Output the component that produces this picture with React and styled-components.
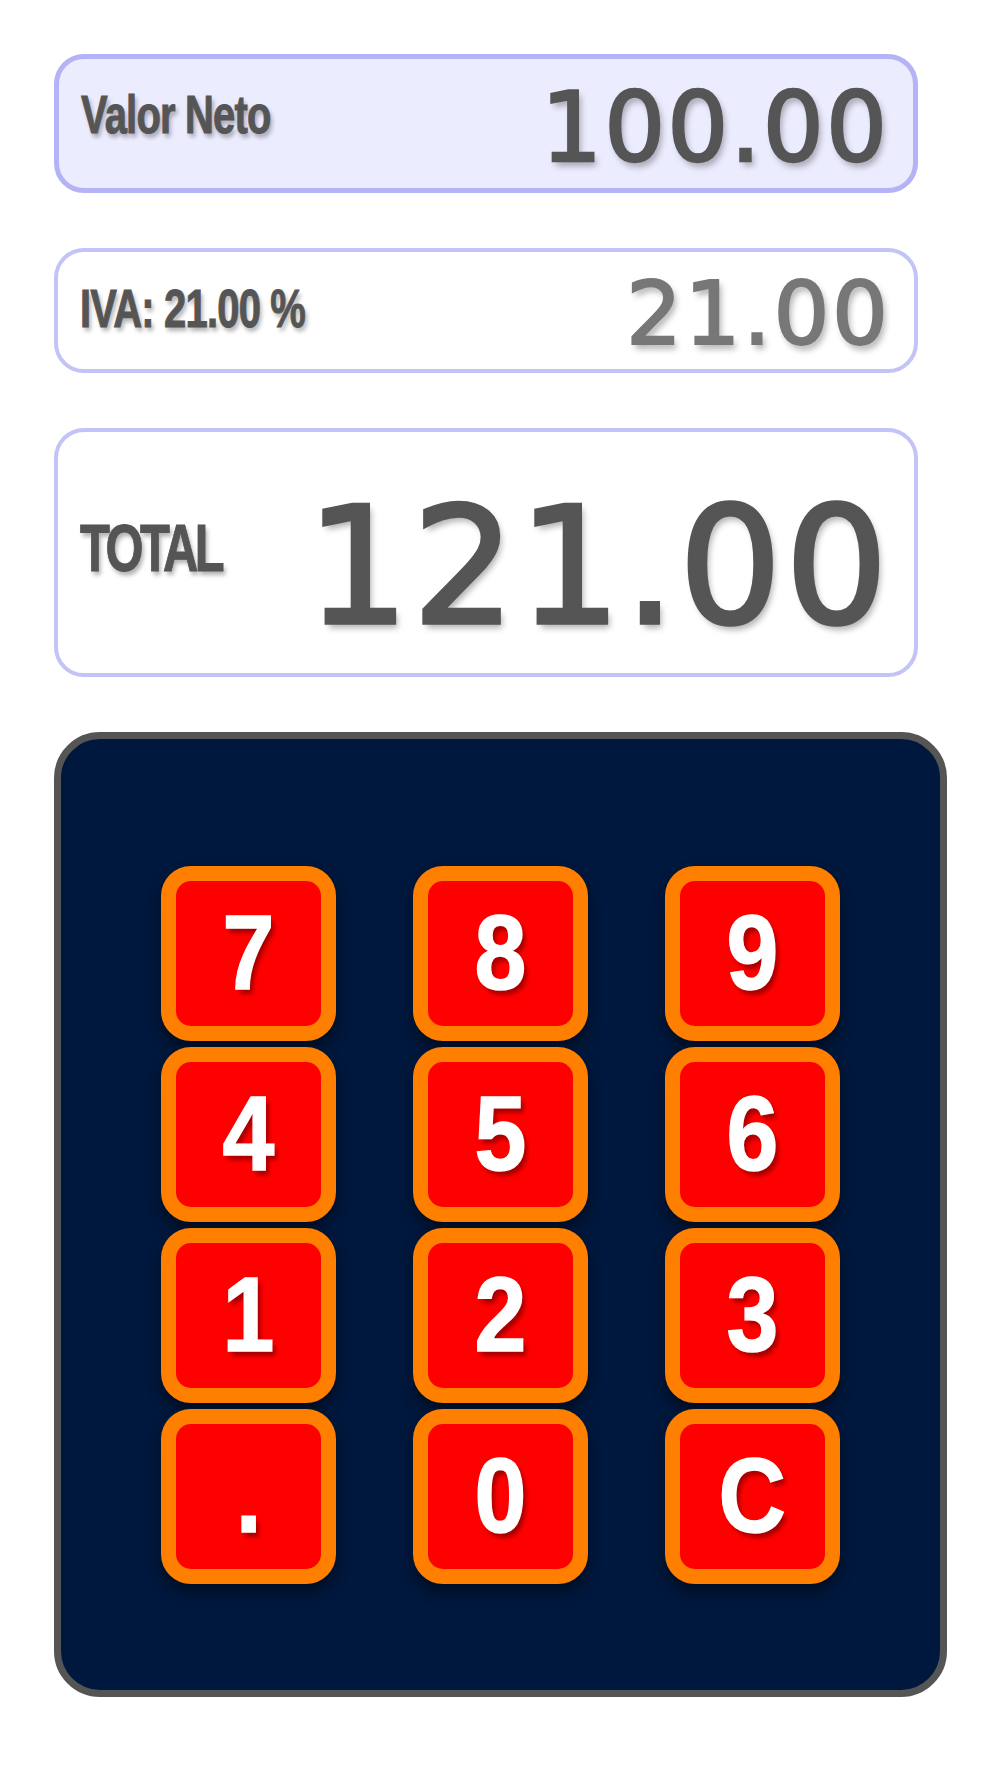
import React from 'react'
import styled, {createGlobalStyle} from 'styled-components'

const GlobalStyle = createGlobalStyle`
    html, body {
        margin: 0;
        padding: 0;
        background: #ffffff;
    }
`

const Page = styled.div`
    display: flex;
    flex-direction: column;
    gap: 55px;
    padding: 54px;
    width: 893px;
`

const DisplayBox = styled.div`
    box-sizing: border-box;
    display: flex;
    align-items: center;
    justify-content: space-between;
    width: 864px;
    height: ${props => props.$height}px;
    padding: 0 26px 0 22px;
    border: ${props => props.$highlight ? '5px solid #b3b3f6' : '4px solid #c3c3f8'};
    border-radius: 30px;
    background-color: ${props => props.$highlight ? '#ececff' : '#ffffff'};
`

// condensed bold look, squeezed from Liberation Sans Bold
const Label = styled.span`
    display: inline-block;
    font-family: "Liberation Sans", Arial, sans-serif;
    font-weight: bold;
    font-size: ${props => props.$size}px;
    letter-spacing: ${props => props.$track}em;
    line-height: 1;
    white-space: nowrap;
    color: #555555;
    -webkit-text-stroke: 1px #555555;
    text-shadow: 3px 4px 5px rgba(0, 0, 0, 0.3);
    transform: scaleX(0.74);
    transform-origin: left center;
    margin-top: ${props => props.$shift || 0}px;
`

const Amount = styled.span`
    font-family: "DejaVu Sans", sans-serif;
    font-size: ${props => props.$size}px;
    letter-spacing: ${props => props.$spacing}px;
    line-height: 1;
    white-space: nowrap;
    color: ${props => props.$color};
    -webkit-text-stroke: ${props => props.$stroke}px ${props => props.$color};
    text-shadow: 3px 5px 6px rgba(0, 0, 0, 0.3);
    margin-top: ${props => props.$shift || 0}px;
    margin-right: -${props => props.$spacing}px;
`

const Keypad = styled.div`
    box-sizing: border-box;
    width: 893px;
    height: 965px;
    padding: 127px 0 0;
    border: 7px solid #555555;
    border-radius: 46px;
    background-color: #00183d;
    display: flex;
    justify-content: center;
`

const KeyGrid = styled.div`
    display: grid;
    grid-template-columns: repeat(3, 175px);
    grid-auto-rows: 175px;
    column-gap: 77px;
    row-gap: 6px;
    align-content: start;
`

const Key = styled.button`
    box-sizing: border-box;
    width: 175px;
    height: 175px;
    padding: 0;
    border: 15px solid #ff7f00;
    border-radius: 30px;
    background-color: #ff7f00;
    box-shadow: 0 8px 14px rgba(0, 0, 0, 0.45);
    cursor: pointer;
`

const KeyFace = styled.div`
    display: flex;
    align-items: center;
    justify-content: center;
    width: 100%;
    height: 100%;
    border-radius: 15px;
    background-color: #ff0000;
`

const KeyText = styled.span`
    display: inline-block;
    font-family: "Liberation Sans", Arial, sans-serif;
    font-weight: bold;
    font-size: 106px;
    line-height: 1;
    color: #ffffff;
    -webkit-text-stroke: 1.5px #ffffff;
    text-shadow: 4px 5px 5px rgba(0, 0, 0, 0.35);
    transform: scaleX(0.88);
    margin-top: -4px;
`

const keys = ['7', '8', '9', '4', '5', '6', '1', '2', '3', '.', '0', 'C']

export default function App() {
    return (
        <Page>
            <GlobalStyle />
            <DisplayBox $height={139} $highlight>
                <Label $size={54} $track={-0.02} $shift={-19}>Valor Neto</Label>
                <Amount $size={96} $spacing={2} $stroke={2.5} $color="#555555" $shift={8}>100.00</Amount>
            </DisplayBox>
            <DisplayBox $height={125}>
                <Label $size={54} $track={-0.02} $shift={-6}>IVA: 21.00 %</Label>
                <Amount $size={88} $spacing={2.5} $stroke={2} $color="#777777" $shift={7}>21.00</Amount>
            </DisplayBox>
            <DisplayBox $height={249}>
                <Label $size={66} $track={-0.07} $shift={-9}>TOTAL</Label>
                <Amount $size={162} $spacing={3} $stroke={3.5} $color="#555555" $shift={28}>121.00</Amount>
            </DisplayBox>
            <Keypad>
                <KeyGrid>
                    {keys.map(k => (
                        <Key key={k}>
                            <KeyFace>
                                <KeyText>{k}</KeyText>
                            </KeyFace>
                        </Key>
                    ))}
                </KeyGrid>
            </Keypad>
        </Page>
    )
}
